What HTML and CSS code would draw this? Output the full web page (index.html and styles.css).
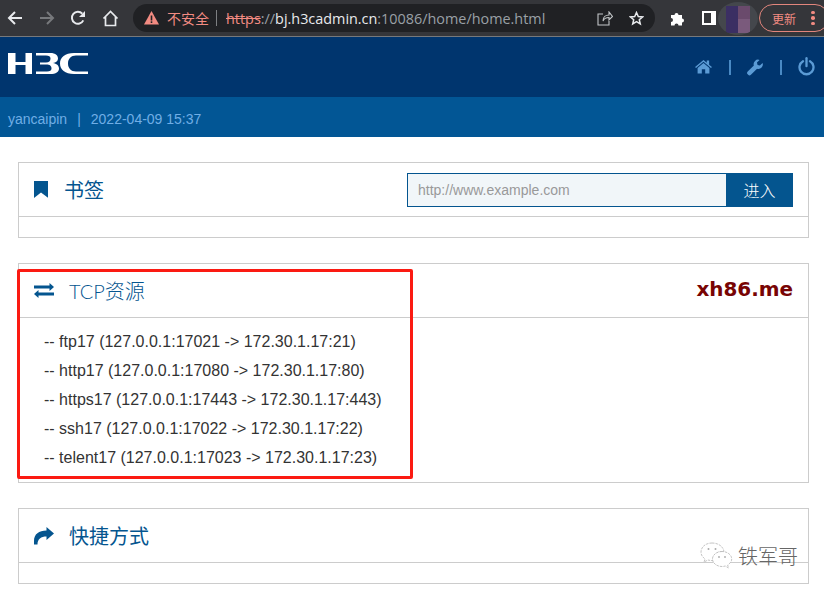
FILE: index.html
```html
<!DOCTYPE html>
<html lang="zh">
<head>
<meta charset="utf-8">
<title>H3C</title>
<link rel="stylesheet" href="styles.css">
</head>
<body>
<div class="toolbar">
  <svg class="tb tb-back" width="16" height="16" viewBox="0 0 16 16"><path d="M15 8H2M8 2L2 8l6 6" fill="none" stroke="#e8eaed" stroke-width="2"/></svg>
  <svg class="tb tb-fwd" width="16" height="16" viewBox="0 0 16 16"><path d="M1 8h13M8 2l6 6-6 6" fill="none" stroke="#77797c" stroke-width="2"/></svg>
  <svg class="tb tb-reload" width="16" height="16" viewBox="0 0 16 16"><path d="M13.300 10.400A6 6 0 1 1 12.300 3.600" fill="none" stroke="#e8eaed" stroke-width="2"/><path d="M15 1v6H9z" fill="#e8eaed"/></svg>
  <svg class="tb tb-home" width="17" height="17" viewBox="0 0 17 17"><path d="M1.500 8.500L8.500 1.500l7 7M3.500 7v8.500h10V7" fill="none" stroke="#e8eaed" stroke-width="1.700"/></svg>
  <div class="omnibox">
    <svg class="warn" width="15" height="14" viewBox="0 0 15 14"><path d="M7.500 0L15 13.500H0z" fill="#f28b82"/><rect x="6.700" y="4.500" width="1.600" height="5" fill="#202124"/><rect x="6.700" y="10.300" width="1.600" height="1.700" fill="#202124"/></svg>
    <span class="insecure">不安全</span>
    <span class="sep"></span>
    <span class="url"><s class="scheme">https</s><span class="dim">://</span><span class="host">bj.h3cadmin.cn</span><span class="dim">:10086/home/home.html</span></span>
    <svg class="share" width="16" height="15" viewBox="0 0 16 15"><path d="M6 3H1v11h11v-4M6 10c0-4 3-6 6-6V1l3.500 4.500L12 9V6.500c-3 0-5 1-6 3.500z" fill="none" stroke="#c4c7c9" stroke-width="1.100"/></svg>
    <svg class="star" width="15" height="15" viewBox="0 0 15 15"><path d="M7.500 1.500l1.800 4 4.300.4-3.300 2.800 1 4.300-3.800-2.300-3.800 2.300 1-4.300L1.400 5.900l4.300-.4z" fill="none" stroke="#e8eaed" stroke-width="1.500"/></svg>
  </div>
  <svg class="puzzle" width="15" height="15" viewBox="0 0 15 15"><path d="M1 4h3.500a2 2 0 1 1 4 0H12v3.500a2 2 0 1 1 0 4V14.500H8.500a2 2 0 1 0-4 0H1v-3.500a2 2 0 1 0 0-4z" fill="#fff"/></svg>
  <span class="sidepanel"><span class="sidepanel-in"></span></span>
  <span class="avatar"><i class="av a1"></i><i class="av a2"></i></span>
  <span class="update"><span>更新</span><span class="dots"><i></i><i></i><i></i></span></span>
</div>

<header class="brand">
  <svg class="logo" width="80" height="21" viewBox="0 0 80 21" role="img" aria-label="H3C">
    <path fill="#fff" d="M0 0h7.500v9h10V0H24v21h-6.500V12h-10v9H0z"/>
    <path fill="#fff" d="M28 0H42C48 0 50 2.500 50 5.500C50 8 48 9.500 45 10C48.500 10.500 51 12.500 51 15.500C51 19 48 21 42 21H28V18.500H39C42 18.500 43.500 17.500 43.500 15.500C43.500 13 42 11.500 38 11.500H32V9.500H38C41 9.500 42.500 8 42.500 5.500C42.500 3.500 41 2.500 38 2.500H28z"/>
    <path fill="#fff" d="M80 0H66C57 0 52 4.500 52 10.500C52 16.500 57 21 66 21H80V18.500H68C63 18.500 60 15 60 10.500C60 6 63 2.500 68 2.500H80z"/>
  </svg>
  <nav class="brand-nav">
    <svg class="nav-home" width="17" height="15" viewBox="0 0 18 16"><path d="M9 1L0 8.500l1 1.200L9 3l8 6.700 1-1.200-3-2.500V1.500h-2.500v2.400z" fill="#5b9bd5"/><path d="M9 4.300L2.700 9.600V15.500h4.500v-4.500h3.600v4.500h4.500V9.600z" fill="#5b9bd5"/></svg>
    <span class="nav-sep"></span>
    <svg width="16" height="17" viewBox="0 0 18 18"><path d="M17.500 3.800l-3 3-2.600-.7-.7-2.600 3-3A5 5 0 0 0 7.700 6.700L.8 13.600a2.200 2.200 0 0 0 0 3.100l.5.500a2.200 2.200 0 0 0 3.100 0l6.900-6.900a5 5 0 0 0 6.200-6.500z" fill="#5b9bd5"/></svg>
    <span class="nav-sep"></span>
    <svg class="nav-power" width="17" height="19" viewBox="0 0 17 19"><path d="M5 4.200a7 7 0 1 0 7 0" fill="none" stroke="#5b9bd5" stroke-width="2.300" stroke-linecap="round"/><path d="M8.500 1.200v8" fill="none" stroke="#5b9bd5" stroke-width="2.300" stroke-linecap="round"/></svg>
  </nav>
</header>
<div class="userbar"><span>yancaipin</span><span class="user-sep">|</span><span>2022-04-09 15:37</span></div>

<main class="content">
  <section class="panel">
    <div class="panel-head">
      <svg class="ic-book" width="14" height="17" viewBox="0 0 14 17"><path d="M0 0h14.500v17L7 11.500 0 17z" fill="#04558f"/></svg>
      <h2 class="panel-title title-book">书签</h2>
      <form class="go">
        <input class="go-input" type="text" placeholder="http://www.example.com">
        <button class="go-btn" type="button">进入</button>
      </form>
    </div>
    <div class="panel-body"></div>
  </section>

  <section class="panel">
    <div class="panel-head">
      <svg class="ic-swap" width="20" height="15" viewBox="0 0 20 15"><path d="M0 2.500h15.500V0l4.500 4-4.500 4V5.500H0z" fill="#04558f"/><path d="M20 9.500H4.500V7L0 11l4.500 4v-2.500H20z" fill="#04558f"/></svg>
      <h2 class="panel-title title-tcp">TCP资源</h2>
      <span class="stamp">xh86.me</span>
    </div>
    <ul class="tcp-list">
      <li>-- ftp17 (127.0.0.1:17021 -&gt; 172.30.1.17:21)</li>
      <li>-- http17 (127.0.0.1:17080 -&gt; 172.30.1.17:80)</li>
      <li>-- https17 (127.0.0.1:17443 -&gt; 172.30.1.17:443)</li>
      <li>-- ssh17 (127.0.0.1:17022 -&gt; 172.30.1.17:22)</li>
      <li>-- telent17 (127.0.0.1:17023 -&gt; 172.30.1.17:23)</li>
    </ul>
    <div class="highlight"></div>
  </section>

  <section class="panel">
    <div class="panel-head">
      <svg class="ic-share" width="20" height="18" viewBox="0 0 20 18"><path d="M20 6.500L12.500 0V3.500C5 3.500 0 7 0 14V17.500H3.500C3.500 12 7 9.500 12.500 9.500V13z" fill="#04558f"/></svg>
      <h2 class="panel-title title-short">快捷方式</h2>
    </div>
    <div class="panel-body"></div>
    <div class="watermark">
      <svg width="33" height="27" viewBox="0 0 33 27"><g fill="#fff" stroke="#b5b5b5" stroke-width=".8" stroke-dasharray="2.500 1"><path d="M12 1C5.500 1 1 5 1 10c0 3 1.500 5 4 7l-1 3 4-2c1.500.4 3 .6 5 .5-1-5 4-9.500 11-9C23 4 18 1 12 1z"/><path d="M22 9.500c-5.500 0-9.500 3.500-9.500 7.500s4 7.500 9.500 7.500c1.200 0 2.200-.2 3.300-.5l3.200 2-.8-3c2.500-1.500 4-3.700 4-6 0-4-4-7.500-9.700-7.500z"/></g><circle cx="8.500" cy="7" r="1" fill="#aaa"/><circle cx="15.500" cy="7" r="1" fill="#aaa"/><circle cx="19" cy="15" r=".9" fill="#aaa"/><circle cx="25" cy="15" r=".9" fill="#aaa"/></svg>
      <span class="wm-text">铁军哥</span>
    </div>
  </section>
</main>
</body>
</html>
```
FILE: styles.css
```css
* { box-sizing: border-box; }
html, body { margin: 0; padding: 0; }
body {
  width: 824px;
  height: 591px;
  overflow: hidden;
  background: #fff;
  font-family: "Liberation Sans", "Noto Sans CJK SC", sans-serif;
}

/* browser toolbar */
.toolbar {
  display: flex;
  align-items: center;
  height: 37px;
  background: #35363a;
  border-bottom: 1px solid #77797c;
  padding-left: 7px;
  overflow: hidden;
}
.tb { flex: none; }
.tb-fwd { margin-left: 16px; }
.tb-reload { margin-left: 15px; }
.tb-home { margin-left: 16px; }
.omnibox {
  flex: none;
  display: flex;
  align-items: center;
  width: 522px;
  height: 28px;
  margin-left: 14px;
  padding-left: 11px;
  border-radius: 14px;
  background: #202124;
}
.warn { flex: none; }
.insecure {
  margin-left: 8px;
  font-size: 14px;
  color: #f28b82;
  font-family: "Noto Sans CJK SC", sans-serif;
}
.sep { width: 1px; height: 16px; margin: 0 9px 0 7px; background: #7d7f82; }
.url { flex: 1; font-family: "Open Sans", sans-serif; font-size: 14.4px; white-space: nowrap; color: #9aa0a6; }
.scheme { color: #f28b82; }
.host { color: #e8eaed; }
.share { flex: none; margin-right: 16px; }
.star { flex: none; margin-right: 11px; }
.puzzle { flex: none; margin-left: 15px; }
.sidepanel {
  flex: none;
  width: 14px;
  height: 14px;
  margin-left: 17px;
  background: #fff;
  padding: 2px 5px 2px 2px;
}
.sidepanel-in { display: block; width: 7px; height: 10px; background: #35363a; }
.avatar {
  flex: none;
  display: flex;
  width: 40px;
  height: 33px;
  margin-left: 2px;
  padding: 4px 0 0 8px;
  border-radius: 50%;
  background: #44474c;
  overflow: hidden;
}
.av { display: block; width: 12px; height: 27px; }
.a1 { background: #3b2f63; }
.a2 { background: linear-gradient(#6a4a6c 50%, #7a5a7c 50%); }
.update {
  flex: none;
  display: flex;
  align-items: center;
  width: 70px;
  height: 28px;
  margin-left: 1px;
  padding-left: 12px;
  border: 1px solid #e3867d;
  border-radius: 14px;
  font-size: 12px;
  color: #f28b82;
  font-family: "Noto Sans CJK SC", sans-serif;
}
.dots { display: flex; flex-direction: column; gap: 2px; margin-left: 15px; }
.dots i { display: block; width: 3.500px; height: 3.500px; border-radius: 50%; background: #f28b82; }

/* blue header */
.brand {
  display: flex;
  align-items: center;
  justify-content: space-between;
  height: 60px;
  background: #00356e;
  padding: 0 9px 0 8px;
}
.logo { margin-top: -7px; }
.brand-nav { display: flex; align-items: center; }
.nav-home { margin-top: -2px; }
.nav-power { margin-top: -1px; }
.nav-sep { width: 2px; height: 15px; margin: 1px 16px 0 17px; background: #4a8ac4; }
.userbar {
  display: flex;
  align-items: center;
  height: 40px;
  padding: 4px 0 0 8px;
  background: #025695;
  font-size: 14px;
  color: #70aee6;
}
.user-sep { margin: 0 10px; }

/* panels */
.content { padding: 25px 15px 0 18px; }
.panel {
  position: relative;
  margin-bottom: 25px;
  border: 1px solid #ccc;
}
.panel-head {
  display: flex;
  align-items: center;
  height: 54px;
  padding: 0 15px;
  border-bottom: 1px solid #ccc;
}
.panel-body { height: 20px; }
.panel-title {
  margin: 0;
  font-family: "Noto Sans CJK SC", sans-serif;
  font-size: 20px;
  font-weight: 400;
  color: #04558f;
}
.title-book { margin-left: 16px; }
.title-tcp { margin-left: 15px; font-family: Lato, "Noto Sans CJK SC", sans-serif; font-weight: 300; }
.title-short { margin-left: 15px; }
.go { display: flex; margin: 0 0 0 auto; }
.go-input {
  width: 319px;
  height: 34px;
  padding: 0 10px;
  border: 1px solid #04558f;
  border-right: 0;
  border-radius: 0;
  background: #f1f6f9;
  font-family: "Liberation Sans", sans-serif;
  font-size: 14px;
  outline: none;
}
.go-input::placeholder { color: #999; opacity: 1; }
.go-btn {
  width: 67px;
  height: 34px;
  padding: 0;
  border: 0;
  border-radius: 0;
  background: #04558f;
  color: #fff;
  font-family: "Noto Sans CJK SC", sans-serif;
  font-size: 16px;
  font-weight: 300;
}
.stamp {
  margin: -4px 0 0 auto;
  font-family: "DejaVu Sans", sans-serif;
  font-weight: 700;
  font-size: 19px;
  color: #780404;
  transform: scaleX(1.05);
  transform-origin: right center;
}
.tcp-list {
  margin: 0;
  padding: 9px 0 10px 25px;
  list-style: none;
  font-size: 16px;
  line-height: 29px;
  color: #333;
}
.highlight {
  position: absolute;
  left: -2px;
  top: 5px;
  width: 396px;
  height: 210px;
  border: 3px solid #fb1a12;
  border-radius: 2px;
  pointer-events: none;
}
.watermark {
  position: absolute;
  right: 10px;
  top: 32px;
  display: flex;
  align-items: center;
  gap: 5px;
}
.wm-text {
  font-family: "Noto Sans CJK SC", sans-serif;
  font-size: 20px;
  font-weight: 300;
  color: #666;
}
```
